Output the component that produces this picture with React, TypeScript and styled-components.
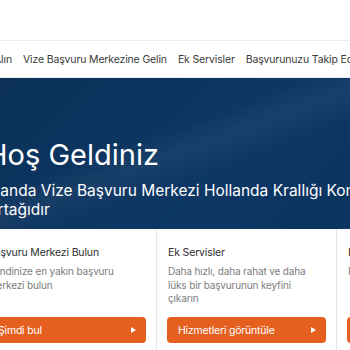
import * as React from "react";
import styled, { createGlobalStyle } from "styled-components";

const GlobalStyle = createGlobalStyle`
  body {
    margin: 0;
    background: #ffffff;
    font-family: Inter, "Noto Sans", sans-serif;
    overflow: hidden;
  }
`;

const Page = styled.div`
  width: 350px;
  height: 350px;
  overflow: hidden;
  background: #ffffff;
`;

const TopSpace = styled.div`
  height: 40px;
`;

const Nav = styled.nav`
  height: 36px;
  border-top: 1px solid #ececec;
  border-bottom: 1px solid #ececec;
  display: flex;
  align-items: center;
  gap: 11px;
  margin-left: -51px;
  white-space: nowrap;
  box-shadow: 0 1px 2px rgba(0, 0, 0, 0.04);
`;

const NavLink = styled.a`
  font-size: 10.5px;
  letter-spacing: -0.15px;
  color: #3a3a3a;
  text-decoration: none;
  flex-shrink: 0;
`;

const Hero = styled.section`
  height: 151px;
  background:
    linear-gradient(160deg, rgba(255, 255, 255, 0) 40%, rgba(255, 255, 255, 0.05) 50%, rgba(255, 255, 255, 0) 62%),
    linear-gradient(135deg, #0b3158 0%, #0d3765 60%, #0c3461 100%);
  padding-top: 60px;
  box-sizing: border-box;
  white-space: nowrap;
`;

const HeroInner = styled.div`
  margin-left: -28px;
`;

const Title = styled.h1`
  margin: 0 0 0 14px;
  font-size: 29px;
  font-weight: 400;
  color: #ffffff;
  line-height: 34px;
`;

const Subtitle = styled.p`
  margin: 9px 0 0;
  font-size: 15.5px;
  font-weight: 400;
  color: #ffffff;
  line-height: 19px;
`;

const Cards = styled.div`
  display: flex;
  margin-left: -23px;
`;

const Card = styled.div`
  flex: 0 0 180px;
  box-sizing: border-box;
  border-right: 1px solid #e6e6e6;
  padding: 17px 10px 0 10px;
  height: 121px;
  display: flex;
  flex-direction: column;
`;

const CardTitle = styled.div`
  font-size: 10.5px;
  letter-spacing: -0.15px;
  color: #2e2e2e;
  padding-left: 1px;
  white-space: nowrap;
  line-height: 14px;
`;

const CardText = styled.div`
  margin-top: 5px;
  font-size: 10px;
  letter-spacing: -0.15px;
  color: #7d7d7d;
  line-height: 13.5px;
  padding-left: 1px;
  max-width: 146px;
  height: 42px;
`;

const Button = styled.a`
  margin-top: auto;
  margin-bottom: 7px;
  height: 26px;
  border-radius: 4px;
  background: #e5601f;
  color: #ffffff;
  font-size: 10.5px;
  letter-spacing: -0.2px;
  display: flex;
  align-items: center;
  justify-content: space-between;
  padding: 0 10px 0 11px;
  white-space: nowrap;
`;

const Arrow = styled.span`
  width: 0;
  height: 0;
  border-top: 3.5px solid transparent;
  border-bottom: 3.5px solid transparent;
  border-left: 5px solid #ffffff;
`;

const cards = [
  { title: "Başvuru Merkezi Bulun", text: "Kendinize en yakın başvuru merkezi bulun", action: "Şimdi bul" },
  { title: "Ek Servisler", text: "Daha hızlı, daha rahat ve daha lüks bir başvurunun keyfini çıkarın", action: "Hizmetleri görüntüle" },
  { title: "Randevu Alın", text: "Randevunuzu çevrimiçi alın", action: "Randevu al" },
];

const App: React.FC = () => (
  <Page>
    <GlobalStyle />
    <TopSpace />
    <Nav>
      <NavLink>Randevu Alın</NavLink>
      <NavLink>Vize Başvuru Merkezine Gelin</NavLink>
      <NavLink>Ek Servisler</NavLink>
      <NavLink>Başvurunuzu Takip Edin</NavLink>
    </Nav>
    <Hero>
      <HeroInner>
        <Title>Hoş Geldiniz</Title>
        <Subtitle>
          Hollanda Vize Başvuru Merkezi Hollanda Krallığı Konsolosluğunun resmi
          <br />
          iş ortağıdır
        </Subtitle>
      </HeroInner>
    </Hero>
    <Cards>
      {cards.map((c) => (
        <Card key={c.title}>
          <CardTitle>{c.title}</CardTitle>
          <CardText>{c.text}</CardText>
          <Button>
            {c.action}
            <Arrow />
          </Button>
        </Card>
      ))}
    </Cards>
  </Page>
);

export default App;
